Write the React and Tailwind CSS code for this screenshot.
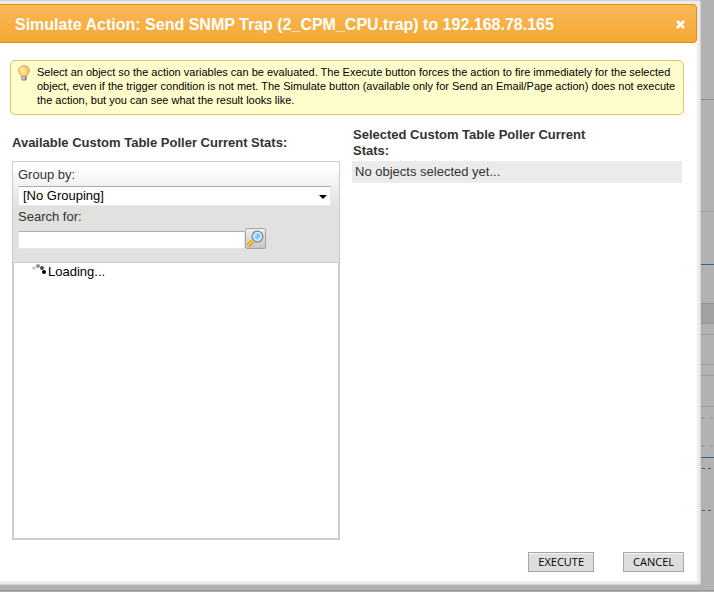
import { useState } from 'react';

function BulbIcon() {
  return (
    <svg className="w-3 h-4 shrink-0" viewBox="0 0 12 16" aria-hidden="true">
      <defs>
        <radialGradient id="bulb" cx="42%" cy="50%" r="60%">
          <stop offset="0" stopColor="#fff3b8" />
          <stop offset="0.5" stopColor="#fcd576" />
          <stop offset="1" stopColor="#f0b04a" />
        </radialGradient>
      </defs>
      <path d="M6 .6C2.900.600.600 2.800.600 5.600c0 2.200 1.500 3.400 2.400 4.900.300.600.300 1.200.400 1.500h5.200c.100-.300.100-.900.400-1.500.900-1.500 2.400-2.700 2.400-4.900C11.400 2.800 9.100.600 6 .600z" fill="url(#bulb)" stroke="#d8a560" strokeWidth="0.9" />
      <path d="M2.300 5.300C2.500 3.500 3.800 2.300 5.500 2.200" fill="none" stroke="#fffbe0" strokeWidth="1.1" />
      <path d="M3.500 11.500h5v3l-1 1h-3l-1-1z" fill="#74788c" />
      <path d="M4 12.500h3M4 14h3" stroke="#e6e9f0" strokeWidth="0.9" />
    </svg>
  );
}

function SearchIcon() {
  return (
    <svg className="w-[17px] h-[17px]" viewBox="0 0 17 17" aria-hidden="true">
      <path d="M.8 15.8 5.800 10.800" stroke="#e58a1f" strokeWidth="4" />
      <path d="M1.200 15.400 6 10.600" stroke="#ffe13c" strokeWidth="2.2" />
      <path d="m1.600 12.800 2.400 2.400M3.600 11l2.400 2.400" stroke="#e8772a" strokeWidth="0.8" />
      <circle cx="10.5" cy="6.500" r="5.300" fill="#b5e3fc" stroke="#8286a8" strokeWidth="1.5" />
      <circle cx="10.5" cy="6.500" r="4.200" fill="none" stroke="#e3f4ff" strokeWidth="0.9" />
      <path d="m8 7 3-3.500 2.500 2-3.500 4z" fill="#74c8fa" />
    </svg>
  );
}

function Spinner() {
  return (
    <svg className="w-4 h-4 shrink-0" viewBox="0 0 16 16" aria-hidden="true">
      <circle cx="2" cy="5" r="1.8" fill="#c4c4c4" />
      <circle cx="6" cy="3" r="2" fill="#8f8f8f" />
      <circle cx="10" cy="5" r="2" fill="#484848" />
      <circle cx="12" cy="9" r="2" fill="#000" />
    </svg>
  );
}

// edges of the dimmed page that show beside the dialog
const pageLines = [
  'mt-[99px] h-px bg-[#8a8a8a]',
  'mt-[111px] h-px bg-[#a0a0a0]',
  'mt-[52px] h-px bg-[#2f6584]',
  'mt-[38px] h-[21px] border-y border-[#949494] bg-[#a1a1a1]',
  'mt-[10px] h-px bg-[#9c9c9c]',
  'mt-[29px] h-px bg-[#9c9c9c]',
  'mt-[10px] h-px bg-[#9c9c9c]',
  'mt-[30px] h-px bg-[#9c9c9c]',
  'mt-[10px] h-[2px] bg-[repeating-linear-gradient(90deg,#9f9f9f_0px_3px,transparent_3px_9px)]',
  'mt-[26px] h-[2px] bg-[repeating-linear-gradient(90deg,#9f9f9f_0px_3px,transparent_3px_9px)]',
  'mt-[10px] h-px bg-[#2f6584]',
  'mt-[10px] ml-px h-px bg-[repeating-linear-gradient(90deg,#2f6584_0px_3px,transparent_3px_6px)]',
  'mt-[41px] ml-px h-px bg-[repeating-linear-gradient(90deg,#2f6584_0px_3px,transparent_3px_6px)]',
];

const buttonClass =
  "h-5 px-[9px] border border-[#a6a6a6] bg-[#dddddd] shadow-[inset_0_1px_0_#f4f4f4] font-['Open_Sans',sans-serif] text-[11px] leading-4 text-black";

export default function App() {
  const [group, setGroup] = useState('none');
  const [query, setQuery] = useState('');

  return (
    <div className="min-h-screen bg-[#b2b2b2] font-['Liberation_Sans',Arial,sans-serif] text-[13px] leading-4 text-[#333333]">
      <div className="flex">
        <main className="flex-1 min-w-0 bg-white border-t border-r border-b border-[#d4d4d4] rounded-r-[3px]">
          <div className="border-t-[3px] border-r-[3px] border-b-[3px] border-[#ececec]">
            <header className="h-[39px] flex items-center justify-between pl-[15px] pr-[11px] border-y border-r border-[#e78f08] rounded-r-[4px] bg-linear-to-b from-[#f8b756] to-[#f5a932] text-white">
              <h1 className="pt-[3px] text-[16px] leading-5 font-bold">
                Simulate Action: Send SNMP Trap (2_CPM_CPU.trap) to 192.168.78.165
              </h1>
              <button type="button" aria-label="Close" className="pt-px">
                <svg className="w-[9px] h-[9px]" viewBox="0 0 9 9" aria-hidden="true">
                  <path d="m1 1 7 7M8 1 1 8" stroke="#fff" strokeWidth="2.8" />
                </svg>
              </button>
            </header>

            <section className="mt-[17px] ml-[10px] mr-[13px] flex gap-[7px] pl-[7px] pr-1 pt-1 pb-[7px] border border-[#e5c365] rounded-[5px] bg-[#fffdcc]">
              <BulbIcon />
              <p className="text-[11px] leading-[14px] text-black">
                Select an object so the action variables can be evaluated. The Execute button forces the action to fire immediately for the selected object, even if the trigger condition is not met. The Simulate button (available only for Send an Email/Page action) does not execute the action, but you can see what the result looks like.
              </p>
            </section>

            <div className="mt-3 ml-3 mr-[15px] grid grid-cols-[328fr_330fr] gap-x-3">
              <div className="flex flex-col">
                <h2 className="h-[34px] flex items-center pb-[3px] font-bold">
                  Available Custom Table Poller Current Stats:
                </h2>
                <div className="border border-[#cccccc]">
                  <div className="h-[100px] pl-[5px] pt-[5px] pr-2 bg-linear-to-b from-white from-5% to-[#e1e1df] to-45%">
                    <label htmlFor="group" className="block">Group by:</label>
                    <div className="relative mt-[3px]">
                      <select
                        id="group"
                        value={group}
                        onChange={e => setGroup(e.target.value)}
                        className="block w-full h-5 appearance-none pl-1 border border-[#e3e9ef] border-t-[#abadb3] bg-white text-black leading-4"
                      >
                        <option value="none">[No Grouping]</option>
                      </select>
                      <svg className="absolute right-1 top-[9px] w-2 h-1 pointer-events-none" viewBox="0 0 8 4" aria-hidden="true">
                        <path d="M0 0h8L4 4z" fill="#000" />
                      </svg>
                    </div>
                    <label htmlFor="search" className="block mt-[3px]">Search for:</label>
                    <div className="mt-[3px] flex items-end">
                      <input
                        id="search"
                        type="text"
                        value={query}
                        onChange={e => setQuery(e.target.value)}
                        className="w-[227px] h-[18px] px-1 border border-[#e3e9ef] border-t-[#abadb3] bg-white text-black"
                      />
                      <button
                        type="button"
                        aria-label="Search"
                        className="w-[21px] h-[21px] flex items-center justify-center border border-[#a3a3a3] rounded-[2px] bg-linear-to-b from-[#f0f0f0] to-[#c4c7c8]"
                      >
                        <SearchIcon />
                      </button>
                    </div>
                  </div>
                  <div className="min-h-[277px] flex items-start pl-[18px] border border-[#cccccc] bg-white text-black">
                    <Spinner />
                    <span className="mt-px">Loading...</span>
                  </div>
                </div>
              </div>

              <div>
                <h2 className="h-[34px] pl-px pr-[70px] font-bold">
                  Selected Custom Table Poller Current Stats:
                </h2>
                <p className="h-[22px] px-[3px] py-[3px] bg-[#ebebeb]">No objects selected yet...</p>
              </div>
            </div>

            <footer className="mt-3 mr-[13px] mb-[9px] flex justify-end gap-[29px]">
              <button type="button" className={buttonClass}>EXECUTE</button>
              <button type="button" className={buttonClass}>CANCEL</button>
            </footer>
          </div>
        </main>
        <div className="w-[13px]" aria-hidden="true">
          {pageLines.map((line, i) => (
            <div key={i} className={line} />
          ))}
        </div>
      </div>
      <div className="mt-[5px] border-t border-[#9a9a9a]" />
    </div>
  );
}
